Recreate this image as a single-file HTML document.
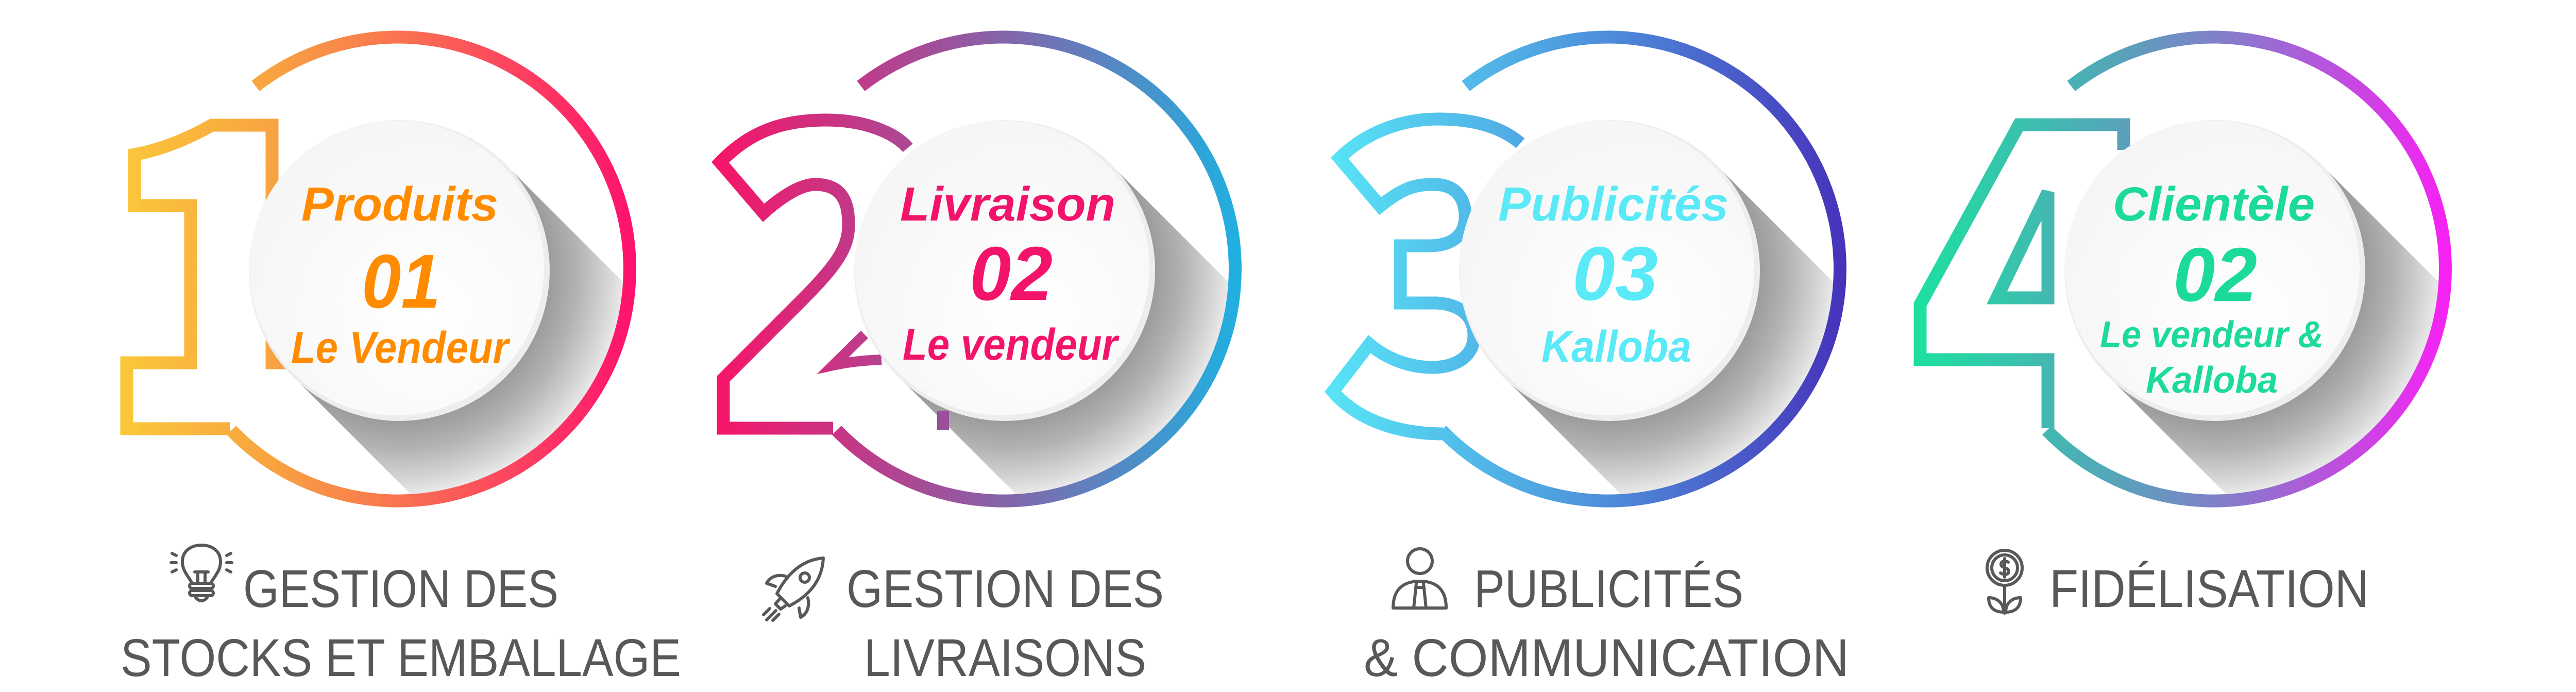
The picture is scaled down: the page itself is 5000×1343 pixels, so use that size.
<!DOCTYPE html>
<html><head><meta charset="utf-8"><style>
html,body{margin:0;padding:0;background:#fff;}
svg{display:block;}
.t{font-family:"Liberation Sans",sans-serif;font-weight:bold;font-style:italic;text-anchor:start;}
.h{font-family:"Liberation Sans",sans-serif;fill:#58585a;font-size:103px;}
.ic{fill:none;stroke:#58585a;stroke-width:6;stroke-linecap:round;stroke-linejoin:round;}
</style></head><body>
<svg width="5000" height="1343" viewBox="0 0 5000 1343" xmlns="http://www.w3.org/2000/svg">
<defs>
<linearGradient id="g1" gradientUnits="userSpaceOnUse" x1="-560" y1="0" x2="470" y2="0">
<stop offset="0" stop-color="#fbca3a"/><stop offset="0.3" stop-color="#f8a440"/><stop offset="0.5" stop-color="#f97c4e"/><stop offset="1" stop-color="#ff0f6e"/></linearGradient>
<linearGradient id="g2" gradientUnits="userSpaceOnUse" x1="-560" y1="0" x2="470" y2="0">
<stop offset="0" stop-color="#f71468"/><stop offset="0.42" stop-color="#a0509a"/><stop offset="1" stop-color="#1db2e2"/></linearGradient>
<linearGradient id="g3" gradientUnits="userSpaceOnUse" x1="-560" y1="0" x2="470" y2="0">
<stop offset="0" stop-color="#58e7f7"/><stop offset="0.45" stop-color="#4f9fe0"/><stop offset="1" stop-color="#4630ba"/></linearGradient>
<linearGradient id="g4" gradientUnits="userSpaceOnUse" x1="-580" y1="0" x2="470" y2="0">
<stop offset="0" stop-color="#1de0a0"/><stop offset="0.35" stop-color="#52a8b8"/><stop offset="0.6" stop-color="#8a78cc"/><stop offset="1" stop-color="#fb1ef5"/></linearGradient>
<radialGradient id="sh" gradientUnits="userSpaceOnUse" cx="2" cy="3" r="445">
<stop offset="0.64" stop-color="#999999"/><stop offset="0.78" stop-color="#b3b3b3"/><stop offset="0.92" stop-color="#d8d8d8"/><stop offset="1" stop-color="#f0f0f0"/></radialGradient>
<radialGradient id="cf" cx="0.6" cy="0.65" r="0.7">
<stop offset="0" stop-color="#ffffff"/><stop offset="1" stop-color="#f5f5f5"/></radialGradient>
<clipPath id="cl"><circle cx="0" cy="0" r="440"/></clipPath>
</defs>

<g transform="translate(773,522)">
<polygon points="208,-203 808,397 396,809 -204,209" fill="url(#sh)" clip-path="url(#cl)"/>
<path d="M -327,310 L -527,310 L -527,182 L -403,182 L -403,-123 L -512,-123 L -512,-222 Q -440,-235 -362,-279 L -245,-279 L -245,182 L -150,182" fill="none" stroke="url(#g1)" stroke-width="25"/>
<path d="M -277,-355 A 450 450 0 1 1 -324 313" fill="none" stroke="url(#g1)" stroke-width="25"/>
<circle cx="2" cy="3" r="292" fill="#ededed"/><circle cx="-3" cy="-2" r="286" fill="url(#cf)"/>
</g>
<g class="t" fill="#ff8c00">
<text x="585" y="428" font-size="93" textLength="382" lengthAdjust="spacingAndGlyphs">Produits</text>
<text x="702" y="597" font-size="148" textLength="153" lengthAdjust="spacingAndGlyphs">01</text>
<text x="565" y="704" font-size="86" textLength="422" lengthAdjust="spacingAndGlyphs">Le Vendeur</text>
</g>

<g transform="translate(1948,522)">
<polygon points="208,-203 808,397 396,809 -204,209" fill="url(#sh)" clip-path="url(#cl)"/>
<path d="M -186,-235 C -211,-265 -271,-289 -344,-289 C -417,-289 -486,-274 -550,-207 L -466,-109 C -426,-145 -391,-164 -366,-164 C -306,-164 -301,-119 -301,-85 C -301,-42 -323,-8 -391,60 L -544,213 L -544,309 L -331,309" fill="none" stroke="url(#g2)" stroke-width="25"/>
<path d="M -270,127 L -331,187 Q -290,178 -237,176" fill="none" stroke="url(#g2)" stroke-width="20"/>
<rect x="-129" y="275" width="23" height="38" fill="#9a4f9b"/>
<path d="M -277,-355 A 450 450 0 1 1 -324 313" fill="none" stroke="url(#g2)" stroke-width="25"/>
<circle cx="2" cy="3" r="292" fill="#ededed"/><circle cx="-3" cy="-2" r="286" fill="url(#cf)"/>
</g>
<g class="t" fill="#f2146a">
<text x="1747" y="428" font-size="93" textLength="418" lengthAdjust="spacingAndGlyphs">Livraison</text>
<text x="1882" y="582" font-size="148" textLength="161" lengthAdjust="spacingAndGlyphs">02</text>
<text x="1752" y="698" font-size="86" textLength="417" lengthAdjust="spacingAndGlyphs">Le vendeur</text>
</g>

<g transform="translate(3122,522)">
<polygon points="208,-203 808,397 396,809 -204,209" fill="url(#sh)" clip-path="url(#cl)"/>
<path d="M -171,-244 C -206,-274 -257,-291 -330,-291 C -403,-291 -471,-265 -522,-215 L -443,-122 C -394,-162 -368,-164 -338,-164 C -300,-164 -278,-141 -278,-102 C -278,-68 -300,-47 -343,-45 L -404,-45 L -404,66 L -334,66 C -283,69 -261,95 -261,129 C -261,172 -300,191 -341,191 C -385,191 -428,176 -464,146 L -535,238 C -488,292 -411,320 -321,320" fill="none" stroke="url(#g3)" stroke-width="25"/>
<path d="M -277,-355 A 450 450 0 1 1 -324 313" fill="none" stroke="url(#g3)" stroke-width="25"/>
<circle cx="2" cy="3" r="292" fill="#ededed"/><circle cx="-3" cy="-2" r="286" fill="url(#cf)"/>
</g>
<g class="t" fill="#5ae9f7">
<text x="2908" y="428" font-size="93" textLength="447" lengthAdjust="spacingAndGlyphs">Publicités</text>
<text x="3052" y="582" font-size="148" textLength="166" lengthAdjust="spacingAndGlyphs">03</text>
<text x="2992" y="702" font-size="86" textLength="291" lengthAdjust="spacingAndGlyphs">Kalloba</text>
</g>

<g transform="translate(4297,522)">
<polygon points="208,-203 808,397 396,809 -204,209" fill="url(#sh)" clip-path="url(#cl)"/>
<path d="M -175,-231 L -175,-280 L -378,-280 L -570,69 L -570,176 L -322,176 L -322,309" fill="none" stroke="url(#g4)" stroke-width="25"/>
<path d="M -421,56 L -322,56 L -322,-149 Z" fill="none" stroke="url(#g4)" stroke-width="25"/>
<path d="M -277,-355 A 450 450 0 1 1 -324 313" fill="none" stroke="url(#g4)" stroke-width="25"/>
<circle cx="2" cy="3" r="292" fill="#ededed"/><circle cx="-3" cy="-2" r="286" fill="url(#cf)"/>
</g>
<g class="t" fill="#1cd99c">
<text x="4101" y="428" font-size="93" textLength="392" lengthAdjust="spacingAndGlyphs">Clientèle</text>
<text x="4218" y="584" font-size="148" textLength="163" lengthAdjust="spacingAndGlyphs">02</text>
<text x="4076" y="674" font-size="72" textLength="434" lengthAdjust="spacingAndGlyphs">Le vendeur &amp;</text>
<text x="4165" y="762" font-size="72" textLength="256" lengthAdjust="spacingAndGlyphs">Kalloba</text>
</g>

<text class="h" x="472" y="1178" textLength="612" lengthAdjust="spacingAndGlyphs">GESTION DES</text>
<text class="h" x="234" y="1312" textLength="1088" lengthAdjust="spacingAndGlyphs">STOCKS ET EMBALLAGE</text>
<text class="h" x="1643" y="1178" textLength="616" lengthAdjust="spacingAndGlyphs">GESTION DES</text>
<text class="h" x="1677" y="1312" textLength="548" lengthAdjust="spacingAndGlyphs">LIVRAISONS</text>
<text class="h" x="2861" y="1178" textLength="523" lengthAdjust="spacingAndGlyphs">PUBLICITÉS</text>
<text class="h" x="2647" y="1312" textLength="942" lengthAdjust="spacingAndGlyphs">&amp; COMMUNICATION</text>
<text class="h" x="3978" y="1178" textLength="620" lengthAdjust="spacingAndGlyphs">FIDÉLISATION</text>

<g class="ic">
<path d="M 372,1130 C 362,1114 354,1106 354,1090 C 354,1069 371,1058 391,1058 C 411,1058 428,1069 428,1090 C 428,1106 420,1114 410,1130"/>
<rect x="368" y="1132" width="46" height="10" rx="5"/>
<rect x="368" y="1146" width="46" height="10" rx="5"/>
<path d="M 380,1160 Q 391,1172 402,1160"/>
<path d="M 384,1130 L 384,1110 M 398,1130 L 398,1110 M 378,1110 L 404,1110"/>
<path d="M 334,1074 L 342,1078 M 332,1092 L 342,1092 M 334,1110 L 342,1106 M 448,1074 L 440,1078 M 450,1092 L 440,1092 M 448,1110 L 440,1106"/>
<path d="M 1598,1083 C 1560,1086 1530,1110 1508,1152 L 1532,1176 C 1574,1154 1596,1124 1598,1083 Z"/>
<circle cx="1562" cy="1121" r="9"/>
<path d="M 1524,1118 C 1508,1114 1494,1120 1488,1132 L 1505,1138"/>
<path d="M 1568,1160 C 1572,1178 1566,1192 1554,1198 L 1551,1180"/>
<path d="M 1513,1163 L 1505,1172 L 1515,1182 L 1524,1176"/>
<path d="M 1482,1193 L 1494,1181 M 1488,1203 L 1506,1185 M 1500,1204 L 1512,1192"/>
<circle cx="2756" cy="1089" r="24"/>
<path d="M 2704,1180 C 2704,1142 2726,1128 2756,1128 C 2786,1128 2807,1142 2807,1180 Z"/>
<path d="M 2749,1132 L 2744,1180 M 2763,1132 L 2768,1180 M 2749,1140 L 2763,1140"/>
<circle cx="3891" cy="1102" r="34"/>
<circle cx="3891" cy="1102" r="25"/>
<path d="M 3898,1091 C 3892,1087 3883,1089 3884,1096 C 3885,1103 3899,1101 3899,1109 C 3899,1116 3889,1116 3883,1112 M 3891,1084 L 3891,1120"/>
<path d="M 3891,1136 L 3891,1190"/>
<path d="M 3889,1188 C 3872,1188 3860,1180 3860,1160 C 3876,1160 3889,1170 3889,1188 Z M 3893,1188 C 3910,1188 3922,1180 3922,1160 C 3906,1160 3893,1170 3893,1188 Z"/>
</g>
</svg>
</body></html>
